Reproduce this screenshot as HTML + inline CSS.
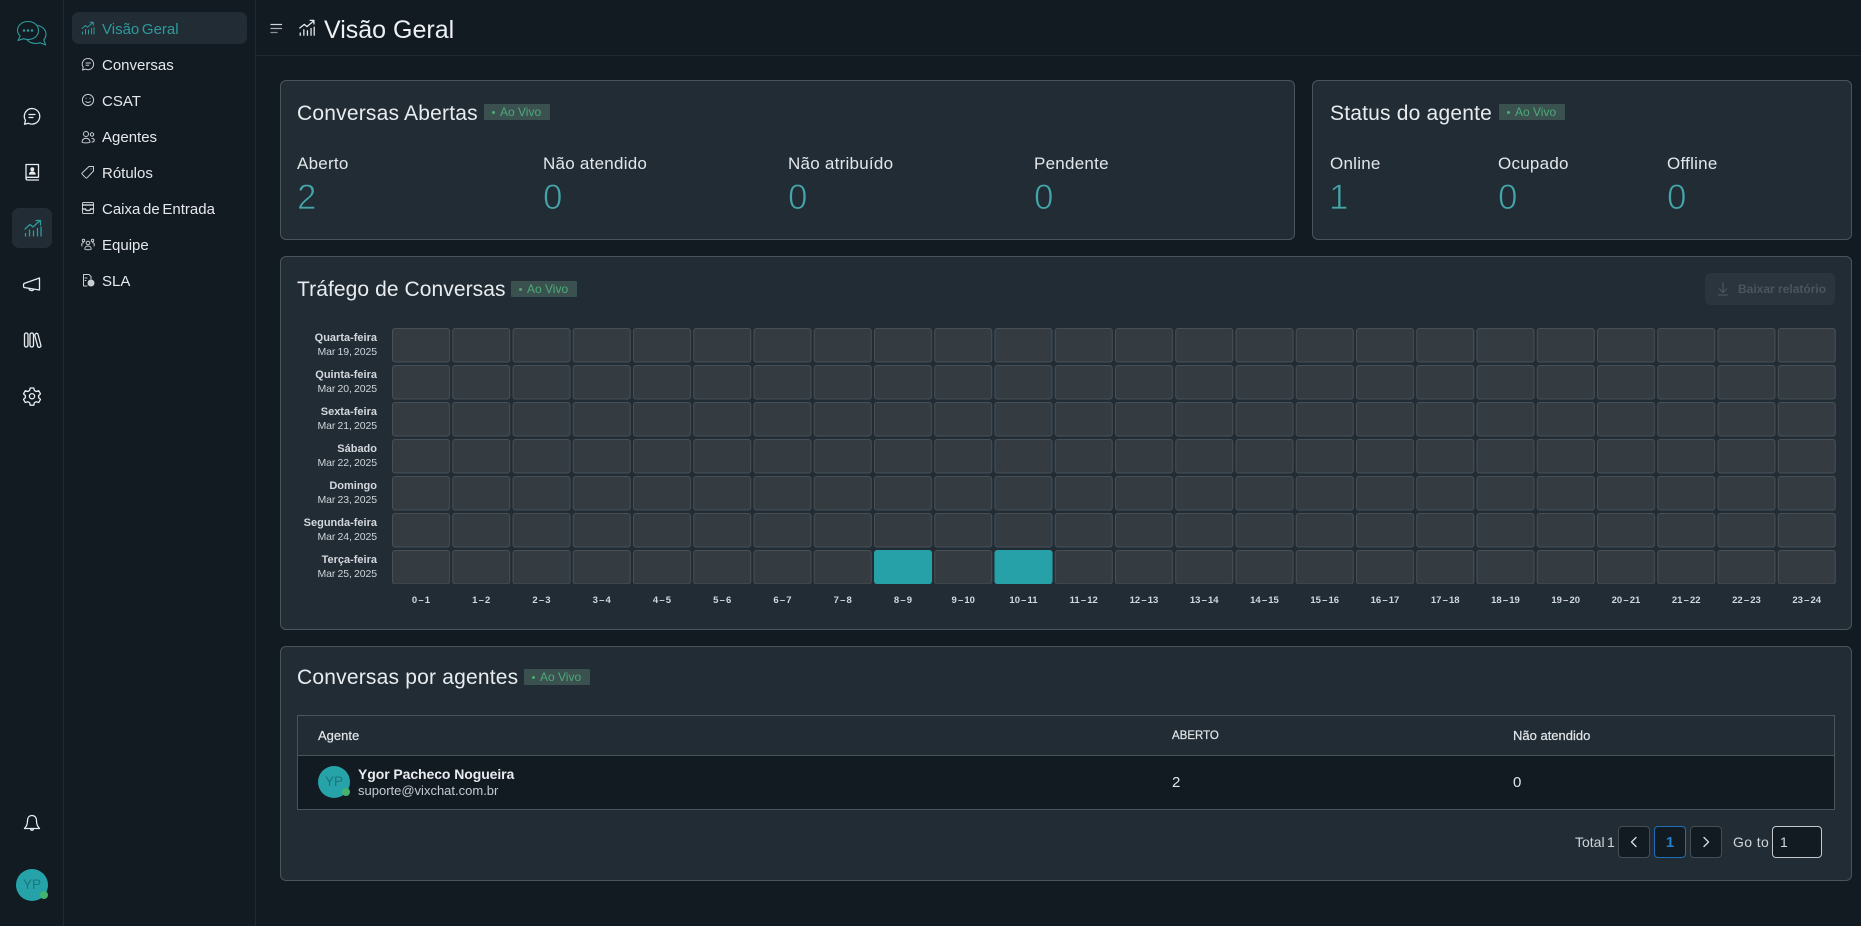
<!DOCTYPE html>
<html lang="pt-BR"><head><meta charset="utf-8"><title>Visão Geral</title>
<style>
*{box-sizing:border-box}
html,body{margin:0;padding:0;width:1861px;height:926px;overflow:hidden;background:#121a22;font-family:"Liberation Sans",sans-serif;color:#e8ecef}
.a{position:absolute;white-space:nowrap}
.line{position:absolute;background:#1f2932}
.nav{position:absolute;left:102px;font-size:15px;line-height:20px;color:#e6e9ec;word-spacing:-1.5px;white-space:nowrap}
.ni{position:absolute;left:81px;width:14px;height:14px;fill:none;stroke:#c9ced2;stroke-width:1;stroke-linecap:round;stroke-linejoin:round}
.ri{position:absolute;width:20px;height:20px;left:22px;fill:none;stroke:#e8ecef;stroke-width:1.3;stroke-linecap:round;stroke-linejoin:round}
.card{position:absolute;background:#212c35;border:1px solid #4a545b;border-radius:6px}
.t{position:absolute;font-size:21px;line-height:26px;color:#e8ecef;white-space:nowrap;letter-spacing:.2px}
.chip{position:absolute;width:66px;height:16px;background:#3a5150;border-radius:1px;color:#4caa78;font-size:12px;line-height:16px;padding-left:8px;white-space:nowrap}
.chip i{display:inline-block;width:3px;height:3px;border-radius:50%;background:#4caa78;vertical-align:2px;margin-right:5px}
.l{position:absolute;font-size:17px;line-height:20px;color:#e2e6e9;white-space:nowrap;letter-spacing:.25px}
.v{position:absolute;font-size:35px;line-height:36px;color:#45a5a8;white-space:nowrap;-webkit-text-stroke:.8px #212c35}
.d{position:absolute;right:1484px;text-align:right;white-space:nowrap;font-size:11px;line-height:14px;color:#cfd4d8}
.d b{display:block;font-weight:700;color:#d4d8dc}
.d span{display:block;margin-top:0;font-size:10.5px;letter-spacing:-.1px;word-spacing:-.6px}
.x{position:absolute;top:594px;width:60px;text-align:center;font-size:9.5px;font-weight:700;line-height:14px;color:#d3d8dc;white-space:nowrap;word-spacing:-1.5px}
.th{position:absolute;font-size:13px;line-height:16px;color:#e2e6e9;white-space:nowrap;-webkit-text-stroke:.2px #e2e6e9}
.pg{position:absolute;top:826px;width:32px;height:32px;background:#121a22;border:1px solid #454d53;border-radius:4px}
</style></head><body>

<div class="line" style="left:63px;top:0;width:1px;height:926px"></div>
<div class="line" style="left:255px;top:0;width:1px;height:926px"></div>
<div class="line" style="left:256px;top:55px;width:1605px;height:1px"></div>

<!-- rail -->
<svg style="position:absolute;left:16px;top:18px;width:32px;height:28px" viewBox="0 -1.5 32 28" fill="none" stroke="#2f9a9c" stroke-width="1.1" stroke-linecap="round" stroke-linejoin="round">
<path d="M12 2c6 0 10.500 3.800 10.500 9s-4.500 9-10.500 9c-1.500 0-3-.3-4.300-.8L2 21l2.200-4.400C2.800 15 1.500 13.200 1.500 11 1.500 5.800 6 2 12 2z"/>
<path d="M22 6c4.500 1 8 4.500 8 8.800 0 2.200-.8 4-2.200 5.500l1.800 5.200-5.500-2.300c-1.400.5-2.800.8-4.300.8-3.600 0-7-1.500-9-4"/>
<circle cx="8" cy="11" r=".7" fill="#2f9a9c"/><circle cx="12" cy="11" r=".7" fill="#2f9a9c"/><circle cx="16" cy="11" r=".7" fill="#2f9a9c"/>
</svg>
<svg class="ri" style="top:106px" viewBox="0 0 20 20"><path d="M10 2.500a7.800 7.800 0 1 1-3.500 14.800l-4 .9 1-3.800A7.800 7.800 0 0 1 10 2.500z"/><path d="M7 8.500h6M7 11.500h4"/></svg>
<svg class="ri" style="top:162px" viewBox="0 0 20 20"><path d="M4 2.500h12.500v12.800H5.500A1.500 1.500 0 0 0 4 16.800zM4 16.800a1.500 1.500 0 0 0 1.500 1.200h11"/><circle cx="10.300" cy="7.200" r="1.300" fill="#e8ecef"/><path d="M7.500 12c.5-1.500 1.500-2 2.800-2s2.300.5 2.800 2z" fill="#e8ecef"/></svg>
<div class="a" style="left:12px;top:208px;width:40px;height:40px;background:#212c35;border-radius:7px"></div>
<svg class="ri" style="top:218px;left:23px;stroke:#2f9a9c" viewBox="0 0 20 20"><path d="M2 11l5-4.500 3 2.500 7-6.500M13 2.500h4.500V7M2.500 18v-2.500M6.500 18v-6M10.500 18v-5M14.500 18v-7.500M18 18v-9"/></svg>
<svg class="ri" style="top:274px" viewBox="0 0 20 20"><path d="M2 9.500 17.500 4v12L2 13.500c-.6-.1-.6-3.900 0-4zM7 14.300c0 2.600 4 3 4.800 1"/></svg>
<svg class="ri" style="top:330px" viewBox="0 0 20 20"><rect x="2.500" y="3" width="3.500" height="14" rx="1.700"/><rect x="8" y="3" width="3.500" height="14" rx="1.700"/><path d="M13.300 4.200c.7-1.200 2-1.200 2.600-.2l3 11.500c.3 1.600-2.300 2.600-3.100 1.100l-3-11c-.1-.5.200-1 .5-1.400z"/></svg>
<svg class="ri" style="top:386px" viewBox="0 0 20 20"><path d="M8.200 2h3.600l.6 2.500 1.800 1 2.500-.8 1.800 3.100-1.900 1.800v2l1.900 1.800-1.800 3.100-2.500-.8-1.800 1-.6 2.500H8.200l-.6-2.500-1.800-1-2.500.8-1.800-3.100 1.900-1.800v-2L1.500 7.800l1.800-3.100 2.500.8 1.800-1z"/><circle cx="10" cy="10.200" r="2.600"/></svg>
<svg class="ri" style="top:813px" viewBox="0 0 20 20"><path d="M10 2.500c-3 0-4.500 2.300-4.500 5.200 0 4-1.300 6-3 7.800h15c-1.700-1.800-3-3.800-3-7.800 0-2.900-1.500-5.200-4.500-5.200zM8.600 15.700c0 2 2.800 2 2.800 0"/></svg>
<div class="a" style="left:16px;top:869px;width:32px;height:32px;border-radius:50%;background:#26a3a8;color:#1b767c;font-size:13.5px;line-height:32px;text-align:center">YP</div>
<div class="a" style="left:40px;top:891px;width:8px;height:8px;border-radius:50%;background:#45b36e"></div>

<!-- nav -->
<div class="a" style="left:72px;top:12px;width:175px;height:32px;background:#212c35;border-radius:7px"></div>
<svg class="ni" style="top:21px;stroke:#2f9a9c" viewBox="0 0 14 14"><path d="M1 7.500l3.500-3 2 1.700L12 1.500M9 1.200h3.300v3.200M1.500 13v-2M4.500 13V8.500M7.500 13V9M10.500 13V7.500M13 13V6.500"/></svg>
<div class="nav" style="top:20px;color:#2f9a9c">Visão Geral</div>
<svg class="ni" style="top:57px" viewBox="0 0 14 14"><path d="M7 1.500a5.600 5.600 0 1 1-2.500 10.600L1.500 13l.7-2.800A5.600 5.600 0 0 1 7 1.500z"/><path d="M5 6h4.500M5 8.200h2.800"/></svg>
<div class="nav" style="top:56px">Conversas</div>
<svg class="ni" style="top:93px" viewBox="0 0 14 14"><circle cx="7" cy="7" r="5.600"/><path d="M4.800 8.500c1 1.300 3.400 1.300 4.400 0M5 5.300h.2M9 5.300h.2"/></svg>
<div class="nav" style="top:92px">CSAT</div>
<svg class="ni" style="top:130px" viewBox="0 0 14 14"><circle cx="5" cy="4" r="2.500"/><path d="M1 12c0-5 8-5 8 0 0 1.200-8 1.200-8 0z"/><circle cx="11" cy="4.500" r="1.700"/><path d="M11 8.500c3 0 3 3.500 0 3.500"/></svg>
<div class="nav" style="top:128px">Agentes</div>
<svg class="ni" style="top:165px" viewBox="0 0 14 14"><path d="M8 1.500h4.500V6L6 12.800c-.4.400-.9.400-1.300 0L1.200 9.200c-.4-.4-.4-.9 0-1.300z"/><path d="M10 4h.1"/></svg>
<div class="nav" style="top:164px">Rótulos</div>
<svg class="ni" style="top:201px" viewBox="0 0 14 14"><rect x="1.500" y="1.500" width="11" height="11" rx="1"/><path d="M1.500 4h11M1.500 8h3c0 2 5 2 5 0h3" stroke-width="1.500"/></svg>
<div class="nav" style="top:200px">Caixa de Entrada</div>
<svg class="ni" style="top:237px" viewBox="0 0 14 14"><circle cx="7" cy="6" r="1.800"/><path d="M3.800 12c0-4 6.400-4 6.400 0 0 1-6.400 1-6.400 0z"/><circle cx="2.500" cy="3.500" r="1.200"/><circle cx="11.500" cy="3.500" r="1.200"/><path d="M1 9c-.8-2 0-3.300 1.500-3.300M13 9c.8-2 0-3.300-1.500-3.300"/></svg>
<div class="nav" style="top:236px">Equipe</div>
<svg class="ni" style="top:273px" viewBox="0 0 14 14"><path d="M6 13H2.500V1.500h5.500l2 2V6M4 5h2M4 7.500h1"/><circle cx="10" cy="10" r="3" fill="#c9ced2"/></svg>
<div class="nav" style="top:272px">SLA</div>

<!-- header -->
<svg class="a" style="left:270px;top:23px;width:13px;height:12px" viewBox="0 0 13 12" fill="none" stroke-linecap="round" stroke-width="1.300"><path d="M1 1.500h10.500" stroke="#d0d4d8"/><path d="M1 5.500h10.500" stroke="#aab0b5"/><path d="M1 9.500h6" stroke="#8b9298"/></svg>
<svg class="a" style="left:298px;top:19px;width:18px;height:18px" viewBox="0 0 20 20" fill="none" stroke="#e8ecef" stroke-width="1.400" stroke-linecap="round" stroke-linejoin="round"><path d="M2 10l5-4 3 2.500 7.500-6.500M13.500 1.500h4.200v4M2.500 18v-2.500M6.500 18v-6M10.500 18v-5M14.500 18v-7.500M18 18v-9"/></svg>
<div class="a" style="left:324px;top:15px;font-size:25px;line-height:30px;color:#eef1f3">Visão Geral</div>

<!-- card 1 -->
<div class="card" style="left:280px;top:80px;width:1015px;height:160px"></div>
<div class="t" style="left:297px;top:101px">Conversas Abertas</div>
<div class="chip" style="left:484px;top:104px"><i></i>Ao Vivo</div>
<div class="l" style="left:297px;top:154px">Aberto</div><div class="v" style="left:297px;top:180px">2</div>
<div class="l" style="left:543px;top:154px">Não atendido</div><div class="v" style="left:543px;top:180px">0</div>
<div class="l" style="left:788px;top:154px">Não atribuído</div><div class="v" style="left:788px;top:180px">0</div>
<div class="l" style="left:1034px;top:154px">Pendente</div><div class="v" style="left:1034px;top:180px">0</div>

<!-- card 2 -->
<div class="card" style="left:1312px;top:80px;width:540px;height:160px"></div>
<div class="t" style="left:1330px;top:101px">Status do agente</div>
<div class="chip" style="left:1499px;top:104px"><i></i>Ao Vivo</div>
<div class="l" style="left:1330px;top:154px">Online</div><div class="v" style="left:1329px;top:180px">1</div>
<div class="l" style="left:1498px;top:154px">Ocupado</div><div class="v" style="left:1498px;top:180px">0</div>
<div class="l" style="left:1667px;top:154px">Offline</div><div class="v" style="left:1667px;top:180px">0</div>

<!-- card 3 -->
<div class="card" style="left:280px;top:256px;width:1572px;height:374px"></div>
<div class="t" style="left:297px;top:277px;letter-spacing:.08px">Tráfego de Conversas</div>
<div class="chip" style="left:511px;top:281px"><i></i>Ao Vivo</div>
<div class="a" style="left:1705px;top:273px;width:130px;height:32px;background:#2a353d;border-radius:5px"></div>
<svg class="a" style="left:1716px;top:282px;width:14px;height:14px" viewBox="0 0 14 14" fill="none" stroke="#4a555d" stroke-width="1.200" stroke-linecap="round" stroke-linejoin="round"><path d="M7 1v9M3.500 7 7 10.500 10.500 7M2.500 13h9"/></svg>
<div class="a" style="left:1738px;top:281px;font-size:12px;line-height:16px;font-weight:700;color:#4a555d">Baixar relatório</div>

<svg class="a" style="left:392px;top:328px;width:1446px;height:256px" viewBox="0 0 1446 256">
<defs><pattern id="c" x="0" y="0" width="60.25" height="37" patternUnits="userSpaceOnUse"><rect x=".5" y=".5" width="57" height="33.500" rx="2.500" fill="#343b41" stroke="#485056"/></pattern></defs>
<rect x="0" y="0" width="1446" height="256" fill="url(#c)"/>
<rect x="482" y="222" width="58" height="34" rx="3" fill="#26a1a8"/>
<rect x="602.500" y="222" width="58" height="34" rx="3" fill="#26a1a8"/>
</svg>

<div class="d" style="top:331px"><b>Quarta-feira</b><span>Mar 19, 2025</span></div>
<div class="d" style="top:368px"><b>Quinta-feira</b><span>Mar 20, 2025</span></div>
<div class="d" style="top:405px"><b>Sexta-feira</b><span>Mar 21, 2025</span></div>
<div class="d" style="top:442px"><b>Sábado</b><span>Mar 22, 2025</span></div>
<div class="d" style="top:479px"><b>Domingo</b><span>Mar 23, 2025</span></div>
<div class="d" style="top:516px"><b>Segunda-feira</b><span>Mar 24, 2025</span></div>
<div class="d" style="top:553px"><b>Terça-feira</b><span>Mar 25, 2025</span></div>

<div class="x" style="left:391px">0 – 1</div><div class="x" style="left:451.25px">1 – 2</div><div class="x" style="left:511.5px">2 – 3</div><div class="x" style="left:571.75px">3 – 4</div><div class="x" style="left:632px">4 – 5</div><div class="x" style="left:692.25px">5 – 6</div><div class="x" style="left:752.5px">6 – 7</div><div class="x" style="left:812.75px">7 – 8</div><div class="x" style="left:873px">8 – 9</div><div class="x" style="left:933.25px">9 – 10</div><div class="x" style="left:993.5px">10 – 11</div><div class="x" style="left:1053.75px">11 – 12</div><div class="x" style="left:1114px">12 – 13</div><div class="x" style="left:1174.25px">13 – 14</div><div class="x" style="left:1234.5px">14 – 15</div><div class="x" style="left:1294.75px">15 – 16</div><div class="x" style="left:1355px">16 – 17</div><div class="x" style="left:1415.25px">17 – 18</div><div class="x" style="left:1475.5px">18 – 19</div><div class="x" style="left:1535.75px">19 – 20</div><div class="x" style="left:1596px">20 – 21</div><div class="x" style="left:1656.25px">21 – 22</div><div class="x" style="left:1716.5px">22 – 23</div><div class="x" style="left:1776.75px">23 – 24</div>

<!-- card 4 -->
<div class="card" style="left:280px;top:646px;width:1572px;height:235px"></div>
<div class="t" style="left:297px;top:665px">Conversas por agentes</div>
<div class="chip" style="left:524px;top:669px"><i></i>Ao Vivo</div>
<div class="a" style="left:297px;top:715px;width:1538px;height:95px;border:1px solid #4a545b"></div>
<div class="a" style="left:298px;top:755px;width:1536px;height:1px;background:#4a545b"></div>
<div class="a" style="left:298px;top:756px;width:1536px;height:53px;background:#121a22"></div>
<div class="th" style="left:318px;top:728px">Agente</div>
<div class="th" style="left:1172px;top:728px;font-size:11.5px">ABERTO</div>
<div class="th" style="left:1513px;top:728px">Não atendido</div>
<div class="a" style="left:318px;top:766px;width:32px;height:32px;border-radius:50%;background:#26a3a8;color:#1b767c;font-size:13.5px;line-height:32px;text-align:center">YP</div>
<div class="a" style="left:342px;top:788px;width:8px;height:8px;border-radius:50%;background:#45b36e"></div>
<div class="a" style="left:358px;top:765px;font-size:14px;line-height:18px;font-weight:700;color:#e8ecef;letter-spacing:-.08px">Ygor Pacheco Nogueira</div>
<div class="a" style="left:358px;top:782px;font-size:13px;line-height:17px;color:#c6cbcf">suporte@vixchat.com.br</div>
<div class="a" style="left:1172px;top:774px;font-size:15px;line-height:18px;color:#e2e6e9">2</div>
<div class="a" style="left:1513px;top:774px;font-size:15px;line-height:18px;color:#e2e6e9">0</div>

<div class="a" style="left:1575px;top:834px;font-size:14px;line-height:17px;color:#d0d4d8;word-spacing:-1.5px">Total 1</div>
<div class="pg" style="left:1618px"><svg style="position:absolute;left:9px;top:9px;width:12px;height:12px" viewBox="0 0 12 12" fill="none" stroke="#d5d9dc" stroke-width="1.400" stroke-linecap="round" stroke-linejoin="round"><path d="M8 1.500 3.500 6 8 10.500"/></svg></div>
<div class="pg" style="left:1654px;border-color:#1e6fb8;color:#1f7fd1;text-align:center;font-size:15px;font-weight:700;line-height:31px">1</div>
<div class="pg" style="left:1690px"><svg style="position:absolute;left:9px;top:9px;width:12px;height:12px" viewBox="0 0 12 12" fill="none" stroke="#d5d9dc" stroke-width="1.400" stroke-linecap="round" stroke-linejoin="round"><path d="M4 1.500 8.500 6 4 10.500"/></svg></div>
<div class="a" style="left:1733px;top:834px;font-size:14px;line-height:17px;color:#d0d4d8;letter-spacing:.4px">Go to</div>
<div class="a" style="left:1772px;top:826px;width:50px;height:32px;background:#121a22;border:1px solid #c4c9cd;border-radius:4px;color:#d5d9dc;font-size:14px;line-height:30px;padding-left:7px">1</div>

</body></html>
